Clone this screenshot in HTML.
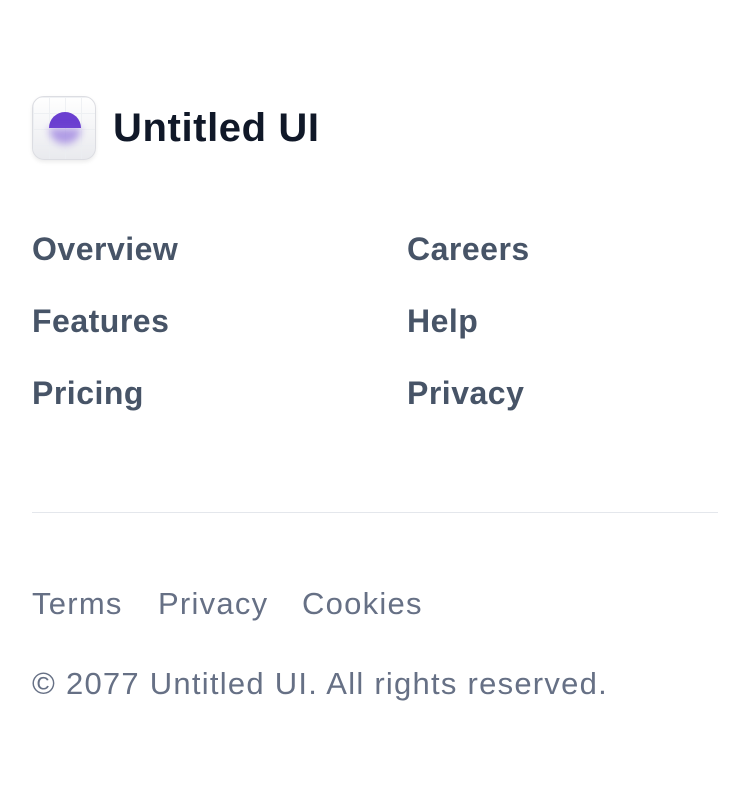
<!DOCTYPE html>
<html><head><style>
*{margin:0;padding:0;box-sizing:border-box}
body{width:750px;height:802px;background:#fff;font-family:"Liberation Sans",sans-serif;position:relative;overflow:hidden}
.logo{position:absolute;left:32px;top:96px;width:64px;height:64px;border-radius:12px;background:linear-gradient(#fff,#e9eaee);border:1px solid #dcdde2;box-shadow:0 2px 4px rgba(0,0,0,.08);overflow:hidden}
.logo .grid{position:absolute;inset:0;background-image:linear-gradient(#eceef2 1px,transparent 1px),linear-gradient(90deg,#eceef2 1px,transparent 1px);background-size:16px 16px;opacity:.8}
.logo .top{position:absolute;left:16px;top:15px;width:32px;height:16px;border-radius:16px 16px 0 0;background:#6b3fd0}
.logo .bot{position:absolute;left:16px;top:31px;width:32px;height:16px;border-radius:0 0 16px 16px;background:#7b55d8;filter:blur(4px);opacity:.55}
.brand{position:absolute;left:113px;top:106px;font-size:40px;font-weight:700;color:#101828;letter-spacing:0.6px}
.link{position:absolute;font-size:32px;font-weight:700;color:#475467;letter-spacing:0.5px}
.hr{position:absolute;left:32px;top:512px;width:686px;height:1px;background:#e4e7ec}
.small{position:absolute;font-size:31px;color:#667085;top:586px;letter-spacing:1.25px}
.copy{position:absolute;left:32px;top:666px;font-size:31px;color:#667085;letter-spacing:1.25px}
</style></head><body>
<div class="logo"><div class="grid"></div><div class="top"></div><div class="bot"></div></div>
<div class="brand">Untitled UI</div>
<div class="link" style="left:32px;top:231px">Overview</div>
<div class="link" style="left:32px;top:303px">Features</div>
<div class="link" style="left:32px;top:375px">Pricing</div>
<div class="link" style="left:407px;top:231px">Careers</div>
<div class="link" style="left:407px;top:303px">Help</div>
<div class="link" style="left:407px;top:375px">Privacy</div>
<div class="hr"></div>
<div class="small" style="left:32px">Terms</div>
<div class="small" style="left:158px">Privacy</div>
<div class="small" style="left:302px">Cookies</div>
<div class="copy">© 2077 Untitled UI. All rights reserved.</div>
</body></html>
